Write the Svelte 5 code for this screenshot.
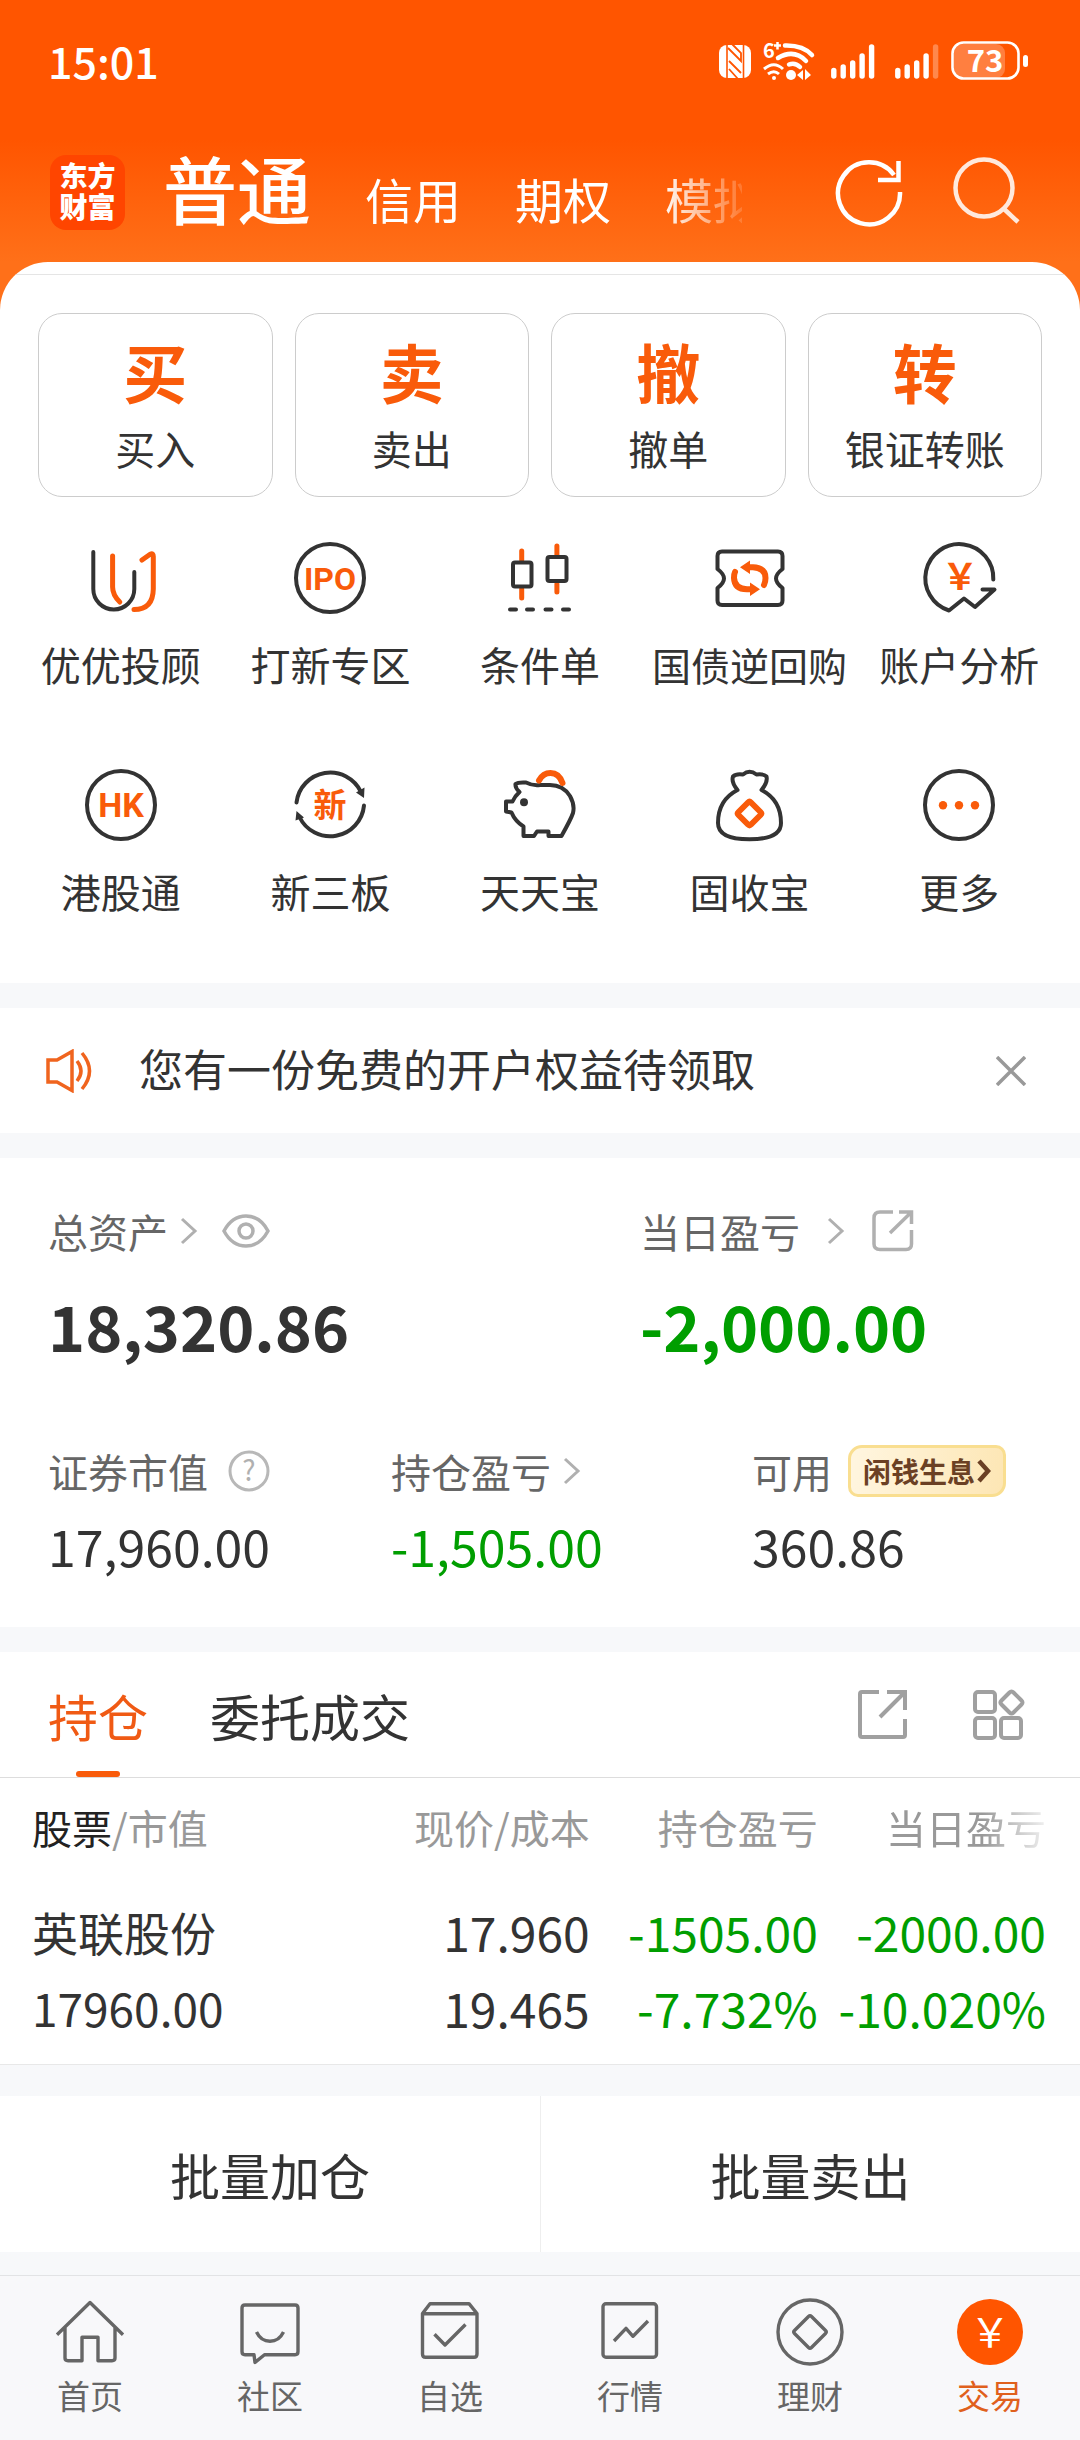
<script>
  let accountTab = $state('普通');
  let listTab = $state('持仓');
  let showNotice = $state(true);

  const accounts = ['普通', '信用', '期权', '模拟'];

  const actions = [
    { mark: '买', label: '买入' },
    { mark: '卖', label: '卖出' },
    { mark: '撤', label: '撤单' },
    { mark: '转', label: '银证转账' }
  ];

  const tools = [
    { icon: 'advisor', label: '优优投顾' },
    { icon: 'ipo', label: '打新专区' },
    { icon: 'candles', label: '条件单' },
    { icon: 'ticket', label: '国债逆回购' },
    { icon: 'analysis', label: '账户分析' },
    { icon: 'hk', label: '港股通' },
    { icon: 'board', label: '新三板' },
    { icon: 'piggy', label: '天天宝' },
    { icon: 'bag', label: '固收宝' },
    { icon: 'more', label: '更多' }
  ];

  const holdings = [
    {
      name: '英联股份',
      value: '17960.00',
      price: '17.960',
      cost: '19.465',
      profit: '-1505.00',
      profitRate: '-7.732%',
      today: '-2000.00',
      todayRate: '-10.020%'
    }
  ];

  const navs = [
    { icon: 'home', label: '首页' },
    { icon: 'chat', label: '社区' },
    { icon: 'box', label: '自选' },
    { icon: 'chart', label: '行情' },
    { icon: 'coin', label: '理财' },
    { icon: 'trade', label: '交易' }
  ];
</script>

{#snippet signal(weak)}
  <svg width="44" height="40" viewBox="0 0 44 40" fill="none" stroke="#fff" stroke-width="5.4" stroke-linecap="round">
    <path d="M2.8 29.5V35M12.2 26V35M21.7 22V35M31.1 15V35" />
    <path d="M40.6 6V35" opacity={weak ? 0.3 : 1} />
  </svg>
{/snippet}

{#snippet chevron()}
  <svg width="18" height="28" viewBox="0 0 18 28" fill="none" stroke="#b0b0b0" stroke-width="3">
    <path d="M2 2L15 14L2 26" />
  </svg>
{/snippet}

{#snippet toolIcon(name)}
  <svg class="tool-icon" width="80" height="80" viewBox="0 0 80 80">
    {#if name === 'advisor'}
      <path class="ink" d="M12.3 14V51A20.5 20.5 0 0 0 53.3 51V34" />
      <path class="hot" d="M31.6 18V49Q31.6 57 38.8 64" />
      <path class="hot" d="M61 22L69.5 16Q72.3 15 72.3 18.5V51Q72 71.5 53 71.5" />
    {:else if name === 'ipo'}
      <circle class="ink" cx="40" cy="40" r="34" />
      <text x="40" y="52" font-size="32">IPO</text>
    {:else if name === 'candles'}
      <path class="hot" d="M21.7 13V22M21.7 51V60M56.9 8V17M56.9 46V54" />
      <rect class="ink" x="13" y="24.5" width="18.5" height="24" rx="2" />
      <rect class="ink" x="47.5" y="19" width="19" height="24" rx="2" />
      <path class="ink" d="M10 71.5H16M27 71.5H33M45.5 71.5H51.5M63 71.5H69" />
    {:else if name === 'ticket'}
      <path class="ink" d="M12 13.5H68Q72.5 13.5 72.5 18V31Q66 36 66 40.5Q66 45 72.5 50V62.5Q72.5 67 68 67H12Q7.5 67 7.5 62.5V50Q14 45 14 40.5Q14 36 7.5 31V18Q7.5 13.5 12 13.5Z" />
      <path class="hot thick" d="M38 29.3H43Q55.5 30 55.5 40Q55.5 44 54 47M25 34Q24 36 24 40Q24.5 51 37 51.3H42" />
      <path class="solid" d="M30 29.3L40 22.5V36ZM50 51.3L40 44.5V58Z" />
    {:else if name === 'analysis'}
      <path class="ink" d="M74.3 41.5A34 34 0 1 0 30 72.5L45 60.5L56 69L75.5 51.5H63.5" />
      <text class="yen" x="41" y="52" font-size="36">&#xffe5;</text>
    {:else if name === 'hk'}
      <circle class="ink" cx="40" cy="40" r="34" />
      <text x="40" y="52" font-size="34">HK</text>
    {:else if name === 'board'}
      <path class="ink" d="M6.5 37.5A34 34 0 0 1 71 27M74 40.5A34 34 0 0 1 9.5 52" />
      <path class="arrow" d="M66 27.5L74.5 22.5L74 33ZM6.5 46L14 52.5L5.5 55.5Z" />
      <text x="40" y="52" font-size="33">新</text>
    {:else if name === 'piggy'}
      <path class="ink" d="M15.5 19Q18 17 26 17.5Q33 21 40 20H50Q63 20 70 31Q75 40 73 48Q71 54 61.5 71H48.5V66.5H37L34 71H23.5V61.5Q15 56 11.5 47.5L6 46.5V36.5H12.5Q15 31 19.5 27Q15 23 15.5 19Z" />
      <circle class="dark" cx="24" cy="37.3" r="4" />
      <path class="hot thick" d="M39 15.5Q43 8 50.5 8Q59 8 62.5 18" />
    {:else if name === 'bag'}
      <path class="ink" d="M27.5 25Q21 17 23 11.5Q26 8.5 33 9.5Q39.5 4 46.5 9.5Q53.5 8.5 56.5 11.5Q58 17 51.5 25Q71 35 71 58Q71 74.3 39.5 74.3Q8 74.3 8 58Q8 35 27.5 25Z" />
      <path class="hot thick" d="M38 37.5Q39.5 36 41 37.5L50.5 47Q52 48.5 50.5 50L41 59.5Q39.5 61 38 59.5L28.5 50Q27 48.5 28.5 47Z" />
    {:else}
      <circle class="ink" cx="40" cy="40" r="34" />
      <circle class="solid" cx="24" cy="40.3" r="4.2" />
      <circle class="solid" cx="40" cy="40.3" r="4.2" />
      <circle class="solid" cx="56" cy="40.3" r="4.2" />
    {/if}
  </svg>
{/snippet}

{#snippet navIcon(name)}
  <svg class="nav-icon" width="72" height="72" viewBox="0 0 72 72">
    {#if name === 'home'}
      <path d="M3 38.7L36 6.5L69 38.7M11 31.5V62Q11 64.7 14 64.7H28V41.3H44V64.7H58Q61 64.7 61 62V31.5" />
    {:else if name === 'chat'}
      <path d="M11 9H61Q64 9 64 12V55.5Q64 58.7 61 58.7H30.5L21 66.5L20 58.7H11Q8 58.7 8 55.5V12Q8 9 11 9Z" />
      <path d="M22.5 36Q27 45.3 36 45.3Q45 45.3 49.5 36" />
    {:else if name === 'box'}
      <path d="M8.5 17.5L16 7.7H55L63 17.5V58Q63 61.3 60 61.3H11.5Q8.5 61.3 8.5 58ZM8.5 17.7H63M20.5 38.3L31 49L51.5 28.5" />
    {:else if name === 'chart'}
      <rect x="9" y="7.7" width="53.5" height="53.6" rx="3" />
      <path d="M20 45L32 32.3L39 40.3L54 25" />
    {:else if name === 'coin'}
      <circle cx="36" cy="36" r="32" />
      <path d="M34.5 20.5Q36 19 37.5 20.5L51.5 34.5Q53 36 51.5 37.5L37.5 51.5Q36 53 34.5 51.5L20.5 37.5Q19 36 20.5 34.5Z" />
    {:else}
      <circle class="disc" cx="36" cy="36" r="33" />
      <text x="36" y="51" font-size="40">&#xffe5;</text>
    {/if}
  </svg>
{/snippet}

<div class="page">
  <div class="hero">
    <div class="status">
      <span class="time">15:01</span>
      <div class="status-icons">
        <svg width="32" height="40" viewBox="0 0 32 40">
          <rect y="4" width="32" height="33" rx="8" fill="#fff" />
          <path d="M8 3V38" fill="none" stroke="#ff5500" stroke-width="1.6" />
          <path d="M24.500 3V38" fill="none" stroke="#ff5500" stroke-width="1.6" />
          <path d="M13 3L22 12V20L9 7M10 20L22 32M10 28L19 38" fill="none" stroke="#ff5500" stroke-width="1.8" />
        </svg>
        <svg width="56" height="40" viewBox="0 0 56 40" fill="none" stroke="#fff" stroke-width="4.5">
          <path d="M22 4.5Q40 4 49 14M15 17Q31 7.5 43 20M26 23.5Q32 21 37 26" stroke-linecap="round" />
          <path d="M1 28Q11 19.5 20 28M5 33Q11 28.5 16 33" stroke-width="3" />
          <circle cx="11" cy="37" r="2" fill="#fff" stroke="none" />
          <circle cx="28" cy="34" r="5" fill="#fff" stroke="none" />
          <path d="M34 34L40 29V39ZM42 28L48 34L42 39Z" fill="#fff" stroke="none" />
          <text x="0" y="17" font-size="20" font-weight="700" fill="#fff" stroke="none">6</text>
          <path d="M11 4.5H18M14.500 1V8.5" stroke-width="2.5" />
        </svg>
        <div class="signals">
          {@render signal(false)}
          {@render signal(true)}
        </div>
        <svg width="79" height="40" viewBox="0 0 79 40">
          <rect x="3" y="3" width="51" height="34" rx="9" fill="#fff" opacity="0.25" />
          <rect x="1.5" y="1.5" width="66" height="36" rx="11" fill="none" stroke="#fff" stroke-width="2.6" />
          <rect x="72" y="14" width="5" height="12" rx="2.5" fill="#fff" />
          <text x="34" y="31" font-size="31" font-weight="700" text-anchor="middle" fill="#fff">73</text>
        </svg>
      </div>
    </div>

    <header class="top">
      <div class="logo">东方<br />财富</div>
      <nav class="accounts">
        {#each accounts as name}
          <button class:active={accountTab === name} onclick={() => (accountTab = name)}>{name}</button>
        {/each}
      </nav>
      <button class="round" aria-label="刷新">
        <svg width="72" height="72" viewBox="0 0 72 72" fill="none" stroke="#fff" stroke-width="4.5">
          <path d="M66 36A31 31 0 1 1 60 19" />
          <path d="M64.5 5V24H44" />
        </svg>
      </button>
      <button class="round" aria-label="搜索">
        <svg width="72" height="72" viewBox="0 0 72 72" fill="none" stroke="#ffe9dd" stroke-width="4.5">
          <circle cx="34" cy="32" r="28.5" />
          <path d="M53 52L68 66" />
        </svg>
      </button>
    </header>

    <section class="sheet">
      <div class="actions">
        {#each actions as action}
          <button class="action">
            <strong>{action.mark}</strong>
            <span>{action.label}</span>
          </button>
        {/each}
      </div>
      <div class="tools">
        {#each tools as tool}
          <button class="tool">
            {@render toolIcon(tool.icon)}
            <span class:long={tool.label.length > 4}>{tool.label}</span>
          </button>
        {/each}
      </div>
    </section>
  </div>

  {#if showNotice}
    <section class="notice">
      <svg width="48" height="44" viewBox="0 0 48 44" fill="none" stroke="#f0641e" stroke-width="3.5">
        <path d="M2 11H11L26 2.5V41.5L11 33H2ZM31 12Q39 22 31 32M36 4Q51 22 36 40" />
      </svg>
      <span>您有一份免费的开户权益待领取</span>
      <button aria-label="关闭" onclick={() => (showNotice = false)}>
        <svg width="30" height="30" viewBox="0 0 30 30" stroke="#999" stroke-width="3.5"><path d="M1 1L29 29M29 1L1 29" /></svg>
      </button>
    </section>
  {/if}

  <section class="assets">
    <div class="totals">
      <div>
        <div class="label">
          总资产 {@render chevron()}
          <svg class="eye" width="48" height="36" viewBox="0 0 48 36" fill="none" stroke="#b0b0b0" stroke-width="3.5">
            <path d="M2 18Q10 3 24 3Q38 3 46 18Q38 33 24 33Q10 33 2 18Z" />
            <circle cx="24" cy="18" r="7" />
          </svg>
        </div>
        <div class="total">18,320.86</div>
      </div>
      <div>
        <div class="label wide">
          当日盈亏 {@render chevron()}
          <svg width="42" height="42" viewBox="0 0 42 42" fill="none" stroke="#b0b0b0" stroke-width="3.5">
            <path d="M21 2H8Q2 2 2 8V34Q2 39.5 8 39.5H34Q39.5 39.5 39.5 34V20M27 2H39.5V14M39.5 2L18 23" />
          </svg>
        </div>
        <div class="total down">-2,000.00</div>
      </div>
    </div>
    <div class="details">
      <div>
        <div class="label spaced">
          证券市值
          <svg width="42" height="42" viewBox="0 0 42 42">
            <circle cx="21" cy="21" r="19" fill="none" stroke="#b8b8b8" stroke-width="3" />
            <text x="21" y="31" font-size="28" text-anchor="middle" fill="#b0b0b0">?</text>
          </svg>
        </div>
        <div class="amount">17,960.00</div>
      </div>
      <div>
        <div class="label">持仓盈亏 {@render chevron()}</div>
        <div class="amount down">-1,505.00</div>
      </div>
      <div>
        <div class="label">
          可用
          <a class="badge" href="#interest">
            闲钱生息
            <svg width="14" height="24" viewBox="0 0 14 24" fill="none" stroke="#6b4024" stroke-width="4.5"><path d="M2 2L11 12L2 22" /></svg>
          </a>
        </div>
        <div class="amount">360.86</div>
      </div>
    </div>
  </section>

  <section class="positions">
    <div class="tabs">
      {#each ['持仓', '委托成交'] as name}
        <button class:active={listTab === name} onclick={() => (listTab = name)}>{name}</button>
      {/each}
      <button class="tab-icon first" aria-label="分享">
        <svg width="54" height="54" viewBox="0 0 54 54" fill="none" stroke="#a0a0a0" stroke-width="4">
          <path d="M23 4H6Q4 4 4 6V47Q4 49 6 49H47Q49 49 49 47V31M31 4H49V22M49 4L24 29" />
        </svg>
      </button>
      <button class="tab-icon" aria-label="布局">
        <svg width="54" height="54" viewBox="0 0 54 54" fill="none" stroke="#a0a0a0" stroke-width="4">
          <rect x="3" y="4" width="20" height="20" rx="3" />
          <rect x="3" y="30" width="20" height="20" rx="3" />
          <rect x="29" y="30" width="20" height="20" rx="3" />
          <path d="M37.5 4.5Q39.5 2.5 41.5 4.5L49.5 12.5Q51.5 14.5 49.5 16.5L41.5 24.5Q39.5 26.5 37.5 24.5L29.5 16.5Q27.5 14.5 29.5 12.5Z" />
        </svg>
      </button>
    </div>

    <table>
      <thead>
        <tr>
          <th><b>股票</b>/市值</th>
          <th>现价/成本</th>
          <th>持仓盈亏</th>
          <th class="fade">当日盈亏</th>
        </tr>
      </thead>
      <tbody>
        {#each holdings as row}
          <tr>
            <td><span class="stock">{row.name}</span><span class="value">{row.value}</span></td>
            <td><span>{row.price}</span><span>{row.cost}</span></td>
            <td class="down"><span>{row.profit}</span><span>{row.profitRate}</span></td>
            <td class="down"><span>{row.today}</span><span>{row.todayRate}</span></td>
          </tr>
        {/each}
      </tbody>
    </table>
  </section>

  <div class="batch">
    <button>批量加仓</button>
    <button>批量卖出</button>
  </div>

  <nav class="bottom">
    {#each navs as item}
      <a href="#{item.icon}" class:current={item.icon === 'trade'}>
        {@render navIcon(item.icon)}
        <span>{item.label}</span>
      </a>
    {/each}
  </nav>
</div>

<style>
  :global(body) {
    margin: 0;
    background: #f8f8fa;
  }

  .page {
    font-family: "Noto Sans CJK SC", "Noto Sans", sans-serif;
    color: #333;
    background: #f7f8fa;
  }

  button {
    margin: 0;
    padding: 0;
    border: 0;
    background: none;
    font: inherit;
    color: inherit;
    cursor: pointer;
  }

  a {
    color: inherit;
    text-decoration: none;
  }

  svg {
    display: block;
    flex: none;
  }

  .down {
    color: #009e00;
  }

  /* header */
  .hero {
    background: linear-gradient(#ff5500 140px, #ff7019 262px);
  }

  .status {
    display: flex;
    align-items: center;
    justify-content: space-between;
    height: 122px;
    padding: 0 50px 0 48px;
    color: #fff;
  }

  .time {
    padding-bottom: 2px;
    font-size: 43px;
    font-weight: 500;
    line-height: 60px;
  }

  .status-icons {
    display: flex;
    gap: 12px;
  }

  .signals {
    display: flex;
    gap: 20px;
  }

  .top {
    display: flex;
    align-items: center;
    height: 140px;
    padding: 0 58px 0 50px;
    color: #fff;
  }

  .logo {
    width: 75px;
    height: 75px;
    box-sizing: border-box;
    padding-top: 5px;
    border-radius: 16px;
    background: #ff4500;
    font-size: 28px;
    font-weight: 900;
    line-height: 31px;
    text-align: center;
  }

  .accounts {
    display: flex;
    flex: 1;
    align-items: baseline;
    gap: 54px;
    min-width: 0;
    margin: 0 92px 0 38px;
    overflow: hidden;
    white-space: nowrap;
    mask-image: linear-gradient(to right, #000 86%, rgba(0, 0, 0, 0.15));
  }

  .accounts button {
    flex: none;
    font-size: 48px;
    line-height: 112px;
  }

  .accounts .active {
    font-size: 74px;
    font-weight: 500;
  }

  .round + .round {
    margin-left: 44px;
  }

  .sheet {
    overflow: hidden;
    border-radius: 48px 48px 0 0;
    background: #fff;
  }

  .sheet::before {
    content: "";
    display: block;
    height: 12px;
    border-bottom: 1px solid #e5e5e5;
  }

  .actions {
    display: grid;
    grid-template-columns: repeat(4, 1fr);
    gap: 22px;
    padding: 38px 38px 0;
  }

  .action {
    display: flex;
    flex-direction: column;
    align-items: center;
    height: 184px;
    box-sizing: border-box;
    padding-top: 16px;
    border: 1px solid #ccc;
    border-radius: 24px;
    font-size: 40px;
    line-height: 76px;
  }

  .action strong {
    font-size: 64px;
    font-weight: 700;
    line-height: 80px;
    color: #f95b0a;
  }

  .tools {
    display: grid;
    grid-template-columns: repeat(5, 1fr);
    row-gap: 71px;
    padding: 41px 16px 62px;
  }

  .tool {
    display: flex;
    flex-direction: column;
    align-items: center;
    gap: 16px;
    font-size: 40px;
    line-height: 60px;
    white-space: nowrap;
  }

  .tool .long {
    font-size: 39px;
  }

  .tool-icon {
    fill: none;
    stroke-linecap: round;
    stroke-linejoin: round;
  }

  .ink {
    stroke: #333;
    stroke-width: 4;
  }

  .hot {
    stroke: #f95b0a;
    stroke-width: 5;
  }

  .thick {
    stroke-width: 6;
  }

  .solid,
  .tool-icon text {
    fill: #f95b0a;
  }

  .tool-icon text {
    font-family: Roboto, "Noto Sans CJK SC", sans-serif;
    font-weight: 700;
    text-anchor: middle;
  }

  .tool-icon .yen {
    font-family: "Noto Sans CJK SC", sans-serif;
  }

  .dark,
  .arrow {
    fill: #333;
  }

  /* notice */
  .notice {
    display: flex;
    align-items: center;
    height: 125px;
    margin-top: 25px;
    padding: 0 54px 0 46px;
    background: #fff;
    font-size: 44px;
    line-height: 60px;
  }

  .notice span {
    flex: 1;
    margin-left: 45px;
    padding-bottom: 6px;
  }

  /* assets */
  .assets {
    margin-top: 25px;
    padding: 43px 48px 38px;
    background: #fff;
  }

  .totals,
  .details {
    display: grid;
    grid-template-columns: 592px 1fr;
  }

  .details {
    grid-template-columns: 343px 361px 1fr;
    margin-top: 52px;
  }

  .label {
    display: flex;
    align-items: center;
    gap: 12px;
    height: 60px;
    font-size: 40px;
    color: #666;
    white-space: nowrap;
  }

  .label.spaced {
    gap: 20px;
  }

  .label.wide {
    gap: 27px;
  }

  .eye {
    margin-left: 12px;
  }

  .total {
    font-size: 63px;
    font-weight: 700;
    line-height: 128px;
  }

  .amount {
    font-size: 50px;
    line-height: 88px;
  }

  .badge {
    display: flex;
    align-items: center;
    gap: 2px;
    height: 52px;
    box-sizing: border-box;
    margin-left: 4px;
    padding: 0 12px;
    border: 3px solid #f9de90;
    border-radius: 14px 10px 14px 10px;
    background: linear-gradient(100deg, #fff6e0, #fde6b4);
    font-size: 28px;
    font-weight: 700;
    color: #6b4024;
  }

  /* positions */
  .positions {
    margin-top: 25px;
    border-bottom: 1px solid #e8e8e8;
    background: #fff;
  }

  .tabs {
    display: flex;
    align-items: center;
    gap: 62px;
    height: 125px;
    padding: 0 54px 0 48px;
    border-bottom: 1px solid #ddd;
    font-size: 50px;
  }

  .tabs button {
    position: relative;
    line-height: 120px;
  }

  .tabs .active {
    color: #f05a14;
  }

  .tabs .active::after {
    content: "";
    position: absolute;
    bottom: -2px;
    left: 50%;
    width: 44px;
    height: 6px;
    margin-left: -22px;
    border-radius: 3px;
    background: #f95b0a;
  }

  .tab-icon.first {
    margin-left: auto;
  }

  table {
    width: 100%;
    padding: 0 34px 0 32px;
    border-spacing: 0;
    table-layout: fixed;
  }

  th {
    height: 98px;
    padding: 0;
    font-size: 40px;
    font-weight: 400;
    color: #999;
    text-align: right;
    white-space: nowrap;
  }

  th b {
    font-weight: 400;
    color: #222;
  }

  th:first-child,
  td:first-child {
    width: 34%;
    text-align: left;
  }

  th:nth-child(2) {
    width: 21%;
  }

  .fade {
    mask-image: linear-gradient(to right, #000 72%, rgba(0, 0, 0, 0.15));
  }

  td {
    padding: 17px 0 19px;
    font-size: 48px;
    line-height: 76px;
    text-align: right;
  }

  td span {
    display: block;
  }

  td .stock,
  td .value {
    font-size: 46px;
  }

  /* batch buttons and bottom bar */
  .batch {
    display: grid;
    grid-template-columns: 1fr 1fr;
    margin: 31px 0 23px;
    background: #fff;
    font-size: 50px;
    line-height: 156px;
  }

  .batch button + button {
    border-left: 1px solid #eee;
  }

  .bottom {
    display: grid;
    grid-template-columns: repeat(6, 1fr);
    border-top: 1px solid #e2e3e5;
    background: #f8f8fa;
  }

  .bottom a {
    display: flex;
    flex-direction: column;
    align-items: center;
    padding: 20px 0 16px;
    font-size: 33px;
    line-height: 55px;
    color: #666;
  }

  .bottom .current {
    color: #e0601c;
  }

  .nav-icon {
    fill: none;
    stroke: #666;
    stroke-width: 3.4;
    stroke-linejoin: round;
  }

  .nav-icon .disc {
    fill: #ff5500;
    stroke: none;
  }

  .nav-icon text {
    fill: #fff;
    stroke: none;
    text-anchor: middle;
  }
</style>
